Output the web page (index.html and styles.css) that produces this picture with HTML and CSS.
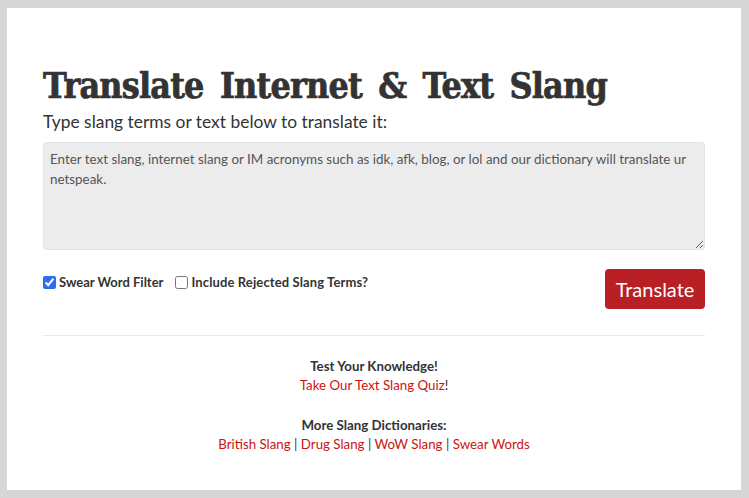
FILE: index.html
```html
<!DOCTYPE html>
<html>
<head>
<meta charset="utf-8">
<link rel="stylesheet" href="styles.css">
</head>
<body>
<div class="page">
  <h1 class="title">Translate Internet &amp; Text Slang</h1>
  <p class="lead">Type slang terms or text below to translate it:</p>
  <textarea class="input" placeholder="Enter text slang, internet slang or IM acronyms such as idk, afk, blog, or lol and our dictionary will translate ur netspeak."></textarea>
  <div class="controls">
    <div class="opts">
      <label class="opt"><input type="checkbox" checked> Swear Word Filter</label>
      <label class="opt"><input type="checkbox"> Include Rejected Slang Terms?</label>
    </div>
    <button class="btn">Translate</button>
  </div>
  <hr class="rule">
  <div class="more">
    <div class="head">Test Your Knowledge!</div>
    <div><a href="#">Take Our Text Slang Quiz</a>!</div>
    <div class="head gap">More Slang Dictionaries:</div>
    <div><a href="#">British Slang</a> | <a href="#">Drug Slang</a> | <a href="#">WoW Slang</a> | <a href="#">Swear Words</a></div>
  </div>
</div>
</body>
</html>
```
FILE: styles.css
```css
html, body { margin: 0; height: 100%; }
body {
  background: #d6d6d6;
  padding: 8px 8px 8px 7px;
  box-sizing: border-box;
  font-family: "Lato", "Liberation Sans", sans-serif;
  color: #333;
}
.page {
  background: #fff;
  height: 100%;
  box-sizing: border-box;
  padding: 54px 36px 0 36px;
}
.title {
  font-family: "DejaVu Serif Condensed", "DejaVu Serif", serif;
  font-stretch: condensed;
  font-weight: 900;
  font-size: 35.5px;
  line-height: 48px;
  margin: 0;
  color: #333;
  letter-spacing: -0.8px;
  word-spacing: 6px;
  -webkit-text-stroke: 0.7px #333;
}
.lead {
  margin: 0 0 8px;
  font-size: 17.4px;
  line-height: 24px;
}
.input {
  display: block;
  width: 100%;
  height: 108px;
  box-sizing: border-box;
  background: #ececec;
  border: 1px solid #e2e2e2;
  border-radius: 4px;
  padding: 6px 6px;
  font-family: "Lato", "Liberation Sans", sans-serif;
  font-size: 13.4px;
  line-height: 20px;
  color: #555;
  resize: vertical;
}
.input::placeholder { color: #555; }
.controls {
  display: flex;
  justify-content: space-between;
  align-items: flex-start;
  margin-top: 19px;
}
.opts { display: flex; gap: 12px; padding-top: 5px; }
.opt {
  font-weight: bold;
  font-size: 13px;
  display: flex;
  align-items: center;
  gap: 3px;
}
.opt input { margin: 0; width: 13px; height: 13px; accent-color: #2a6ff0; }
.opt + .opt { letter-spacing: 0.12px; }
.btn {
  background: #b82025;
  color: #fff;
  border: 0;
  border-radius: 4px;
  width: 100px;
  height: 40px;
  font-family: "Lato", "Liberation Sans", sans-serif;
  font-size: 20px;
}
.rule {
  border: 0;
  border-top: 1px solid #e8e8e8;
  margin: 26px 0 0;
}
.more {
  text-align: center;
  font-size: 13.3px;
  line-height: 19px;
  padding-top: 21px;
}
.head { font-weight: bold; }
.gap { margin-top: 21px; }
.more a { color: #cc1111; text-decoration: none; }
```
